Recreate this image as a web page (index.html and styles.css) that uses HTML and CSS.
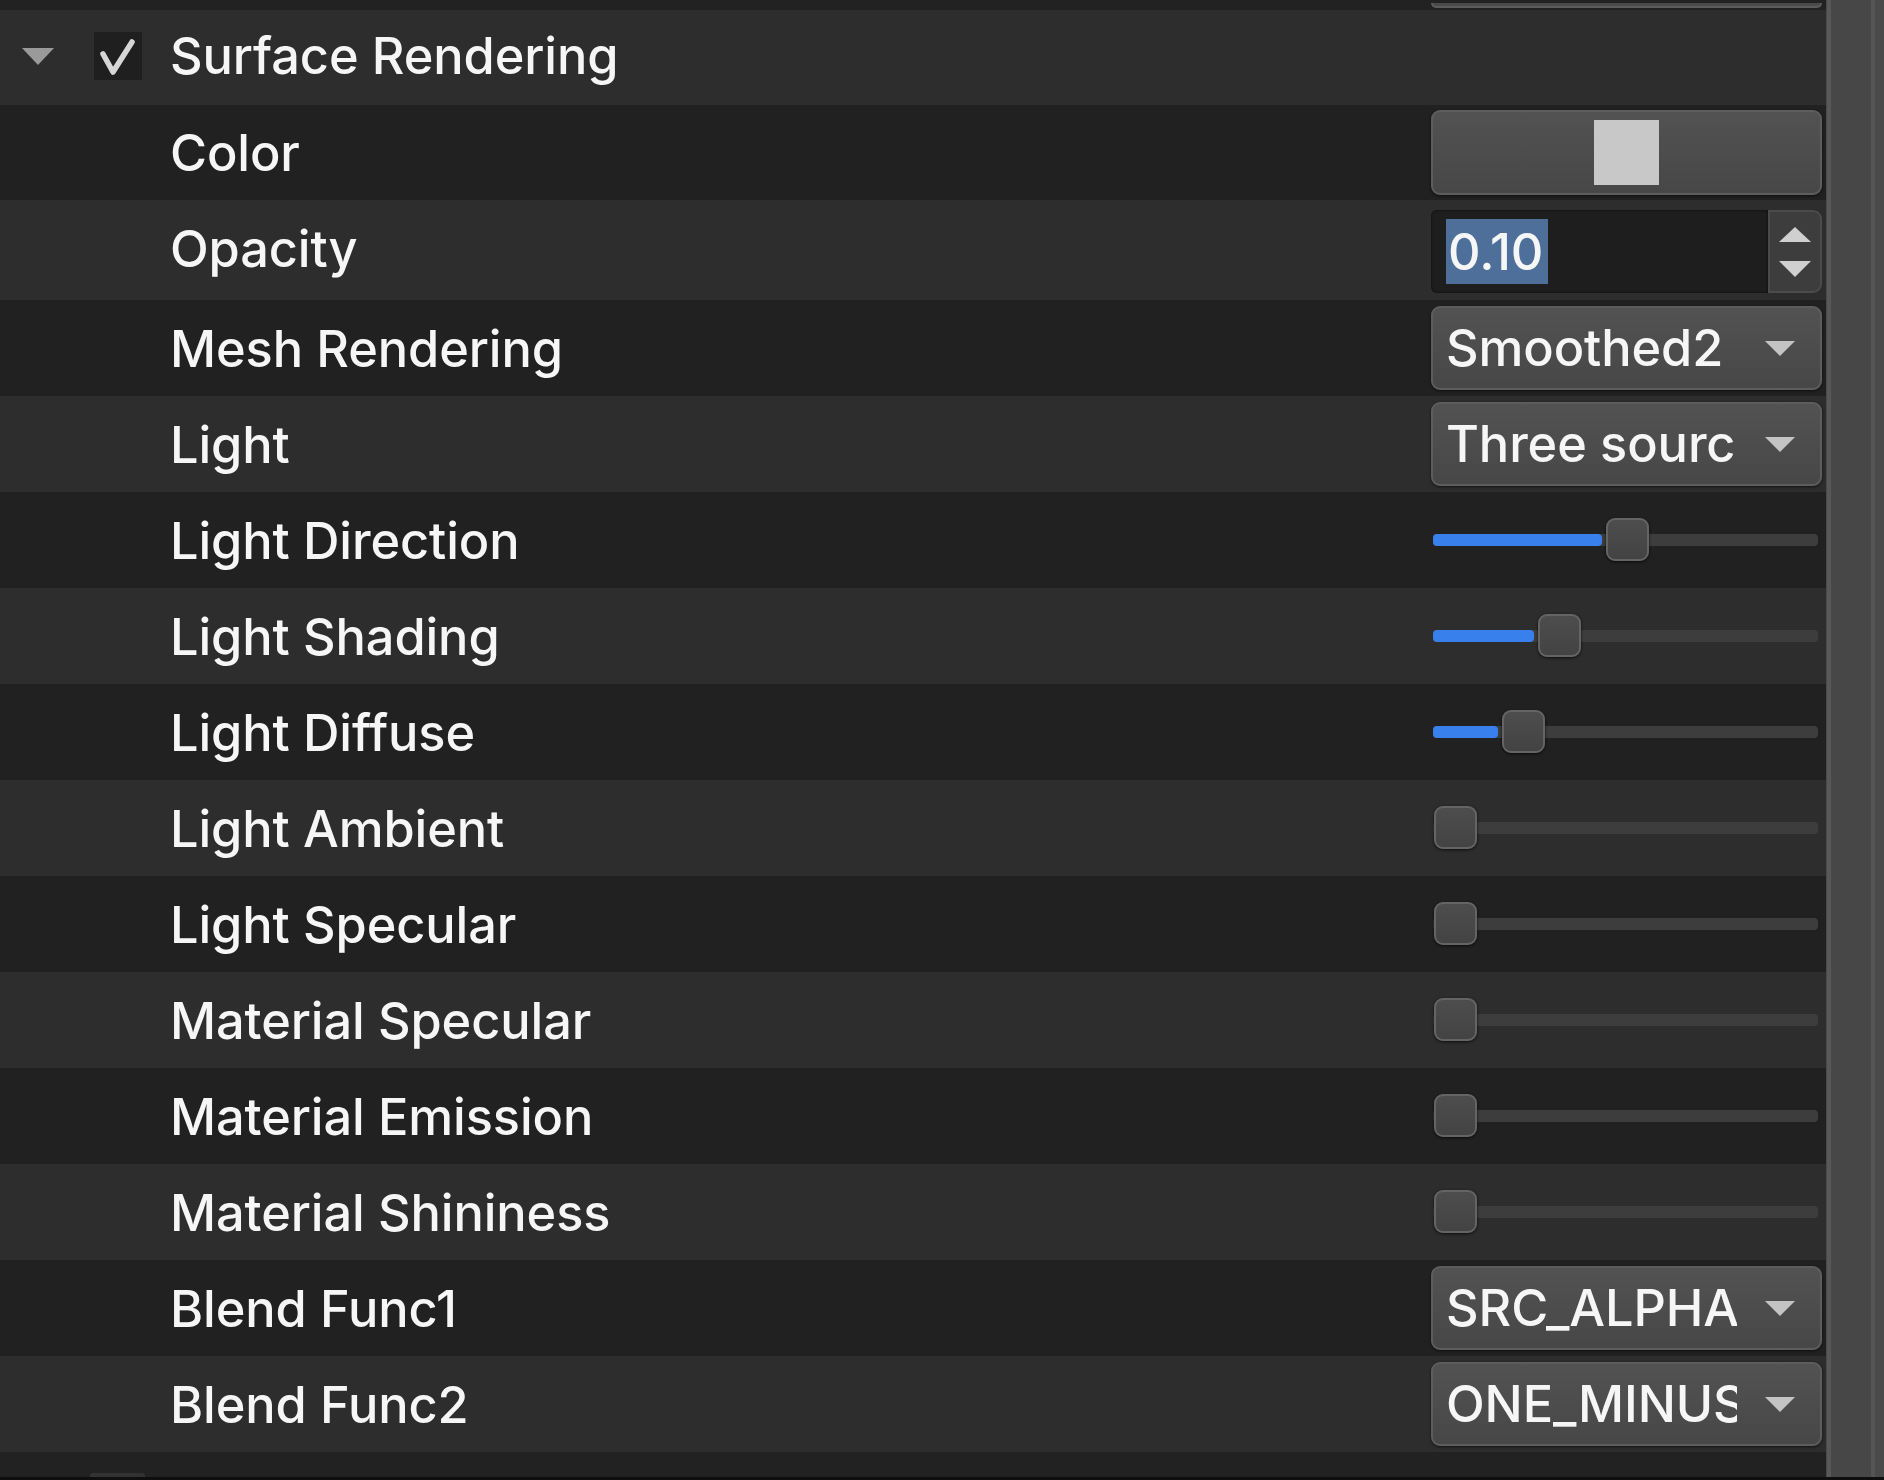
FILE: index.html
```html
<!DOCTYPE html>
<html lang="en">
<head>
<meta charset="utf-8">
<title>Surface Rendering</title>
<link rel="stylesheet" href="styles.css">
</head>
<body>
<div class="window">
  <div class="panel">
    <div class="top-strip"><div class="control"><div class="prev-widget"></div></div></div>

    <div class="row header light">
      <span class="disclosure"></span>
      <span class="checkbox">
        <svg width="48" height="48" viewBox="0 0 48 48"><polyline points="9,22 19,40 38,10" fill="none" stroke="#d6d6d6" stroke-width="5.5" stroke-linecap="round" stroke-linejoin="round"/></svg>
      </span>
      <span class="label">Surface Rendering</span>
    </div>

    <div class="row dark h95">
      <span class="label">Color</span>
      <div class="control"><div class="btn color-btn"><span class="swatch"></span></div></div>
    </div>

    <div class="row light h100">
      <span class="label up1">Opacity</span>
      <div class="control">
        <div class="spinbox">
          <div class="spin-field"><span class="selected">0.10</span></div>
          <div class="spin-buttons"><span class="arrow-up"></span><span class="arrow-down"></span></div>
        </div>
      </div>
    </div>

    <div class="row dark">
      <span class="label">Mesh Rendering</span>
      <div class="control"><div class="btn dropdown"><span class="dd-text">Smoothed2</span><span class="dd-arrow"></span></div></div>
    </div>

    <div class="row light">
      <span class="label">Light</span>
      <div class="control"><div class="btn dropdown"><span class="dd-text">Three sources</span><span class="dd-arrow"></span></div></div>
    </div>

    <div class="row dark">
      <span class="label">Light Direction</span>
      <div class="control"><div class="slider"><div class="track"></div><div class="fill" style="width:169px"></div><div class="handle" style="left:173px"></div></div></div>
    </div>

    <div class="row light">
      <span class="label">Light Shading</span>
      <div class="control"><div class="slider"><div class="track"></div><div class="fill" style="width:101px"></div><div class="handle" style="left:105px"></div></div></div>
    </div>

    <div class="row dark">
      <span class="label">Light Diffuse</span>
      <div class="control"><div class="slider"><div class="track"></div><div class="fill" style="width:65px"></div><div class="handle" style="left:69px"></div></div></div>
    </div>

    <div class="row light">
      <span class="label">Light Ambient</span>
      <div class="control"><div class="slider"><div class="track"></div><div class="handle" style="left:1px"></div></div></div>
    </div>

    <div class="row dark">
      <span class="label">Light Specular</span>
      <div class="control"><div class="slider"><div class="track"></div><div class="handle" style="left:1px"></div></div></div>
    </div>

    <div class="row light">
      <span class="label">Material Specular</span>
      <div class="control"><div class="slider"><div class="track"></div><div class="handle" style="left:1px"></div></div></div>
    </div>

    <div class="row dark">
      <span class="label">Material Emission</span>
      <div class="control"><div class="slider"><div class="track"></div><div class="handle" style="left:1px"></div></div></div>
    </div>

    <div class="row light">
      <span class="label">Material Shininess</span>
      <div class="control"><div class="slider"><div class="track"></div><div class="handle" style="left:1px"></div></div></div>
    </div>

    <div class="row dark">
      <span class="label">Blend Func1</span>
      <div class="control"><div class="btn dropdown"><span class="dd-text">SRC_ALPHA</span><span class="dd-arrow"></span></div></div>
    </div>

    <div class="row light">
      <span class="label">Blend Func2</span>
      <div class="control"><div class="btn dropdown"><span class="dd-text">ONE_MINUS_SRC_ALPHA</span><span class="dd-arrow"></span></div></div>
    </div>

    <div class="bottom-strip"><span class="next-box"></span></div>
  </div>
  <div class="scrollbar"><div class="scroll-track"></div></div>
</div>
</body>
</html>
```

FILE: styles.css
```css
* { box-sizing: border-box; }

html, body {
  margin: 0;
  padding: 0;
  background: #0f0f0f;
}

body {
  font-family: Inter, "Noto Sans", "Liberation Sans", sans-serif;
  font-weight: 500;
  color: #f6f6f6;
}

.window {
  display: flex;
  width: 1884px;
  height: 1477px;
  overflow: hidden;
}

.panel {
  flex: 1;
  display: flex;
  flex-direction: column;
  background: #222222;
  overflow: hidden;
}

.top-strip {
  height: 10px;
  background: #222222;
  display: flex;
  overflow: hidden;
}

.prev-widget {
  height: 5px;
  width: 100%;
  background: #4a4a4a;
  border: 2px solid #5c5c5c;
  border-top: none;
  border-radius: 0 0 9px 9px;
}

.row {
  display: flex;
  align-items: center;
  height: 96px;
  padding-left: 170px;
  flex-shrink: 0;
}

.row.h95 { height: 95px; }
.row.h100 { height: 100px; }

.light { background: #2d2d2d; }
.dark { background: #212121; }

.label {
  font-size: 50.5px;
  white-space: nowrap;
  letter-spacing: -0.1px;
}

.label.up1 { margin-bottom: 4px; }

.header {
  height: 95px;
  padding-left: 22px;
  padding-bottom: 4px;
}

.disclosure {
  width: 0;
  height: 0;
  border-left: 16px solid transparent;
  border-right: 16px solid transparent;
  border-top: 17px solid #9a9a9a;
  margin-top: 2px;
}

.checkbox {
  width: 48px;
  height: 48px;
  margin-left: 40px;
  margin-right: 28px;
  background: #1f1f1f;
  display: flex;
}

.control {
  margin-left: auto;
  margin-right: 4px;
  width: 391px;
  display: flex;
  align-items: center;
}

.btn {
  width: 100%;
  height: 85px;
  border: 2px solid #5d5d5d;
  border-radius: 9px;
  background: linear-gradient(#525252, #474747);
  box-shadow: 0 1px 3px rgba(0, 0, 0, 0.6);
}

.color-btn {
  display: flex;
  align-items: center;
  justify-content: center;
}

.swatch {
  width: 65px;
  height: 65px;
  background: #c8c8c8;
}

.spinbox {
  width: 100%;
  height: 83px;
  display: flex;
  margin-top: 2px;
}

.spin-field {
  flex: 1;
  background: #1e1e1e;
  border-radius: 6px 0 0 6px;
  box-shadow: inset 0 0 3px rgba(0, 0, 0, 0.7);
  display: flex;
  align-items: center;
  padding-left: 15px;
}

.selected {
  background: #4d6f99;
  font-size: 50.5px;
  line-height: 65px;
  height: 65px;
  padding: 0 5px 0 2px;
  letter-spacing: -0.1px;
}

.spin-buttons {
  width: 54px;
  background: #3d3d3d;
  border: 2px solid #4b4b4b;
  border-radius: 0 9px 9px 0;
  display: flex;
  flex-direction: column;
  align-items: center;
  padding-top: 15px;
  gap: 19px;
}

.arrow-up {
  width: 0;
  height: 0;
  border-left: 16px solid transparent;
  border-right: 16px solid transparent;
  border-bottom: 15px solid #d0d0d0;
}

.arrow-down {
  width: 0;
  height: 0;
  border-left: 16px solid transparent;
  border-right: 16px solid transparent;
  border-top: 16px solid #d0d0d0;
}

.dropdown {
  height: 84px;
  display: flex;
  align-items: center;
  padding-left: 13px;
  padding-right: 25px;
}

.dd-text {
  width: 291px;
  overflow: hidden;
  white-space: nowrap;
  font-size: 50.5px;
  letter-spacing: -0.1px;
  padding-bottom: 2px;
}

.dd-arrow {
  margin-left: auto;
  width: 0;
  height: 0;
  border-left: 15px solid transparent;
  border-right: 15px solid transparent;
  border-top: 15px solid #c4c4c4;
}

.slider {
  position: relative;
  width: 385px;
  height: 44px;
  margin-left: 2px;
}

.track {
  position: absolute;
  left: 0;
  right: 0;
  top: 16px;
  height: 12px;
  border-radius: 4px;
  background: #3d3d3d;
}

.fill {
  position: absolute;
  left: 0;
  top: 16px;
  height: 12px;
  border-radius: 4px;
  background: #3880ec;
}

.handle {
  position: absolute;
  top: 0;
  width: 43px;
  height: 43px;
  border-radius: 9px;
  border: 2px solid #646464;
  background: linear-gradient(#4d4d4d, #434343);
  box-shadow: 0 1px 3px rgba(0, 0, 0, 0.7);
}

.bottom-strip {
  flex: 1;
  background: #222222;
  position: relative;
  display: flex;
  align-items: flex-end;
  padding-left: 90px;
}

.next-box {
  width: 55px;
  height: 4px;
  background: #323232;
  border-radius: 3px 3px 0 0;
}

.scrollbar {
  width: 58px;
  background: #4a4a4a;
  padding-left: 1px;
  display: flex;
}

.scroll-track {
  width: 48px;
  border-left: 4px solid #585858;
  border-right: 4px solid #555555;
  background: #474747;
}
```
